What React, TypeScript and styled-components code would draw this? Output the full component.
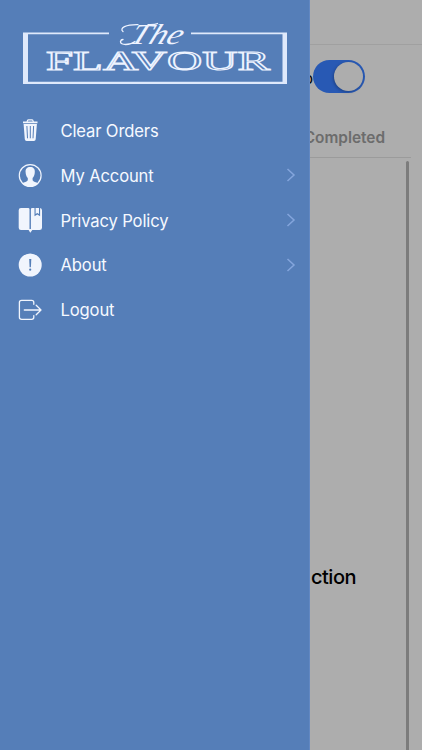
import React from 'react';
import styled, { createGlobalStyle } from 'styled-components';

const GlobalStyle = createGlobalStyle`
  * { box-sizing: border-box; }
  body { margin: 0; background: #adadad; font-family: Inter, sans-serif; }
`;

const Screen = styled.div`
  position: relative;
  width: 422px;
  height: 750px;
  overflow: hidden;
  background: #adadad;
`;

const Page = styled.main`
  height: 100%;
  display: flex;
  flex-direction: column;
`;

const Header = styled.header`
  height: 45px;
  flex: none;
  border-bottom: 1px solid #a0a0a0;
`;

const StatusRow = styled.div`
  height: 63px;
  flex: none;
  display: flex;
  align-items: center;
  justify-content: flex-end;
  padding-right: 57px;
  font-size: 15px;
  color: #000;
`;

const StatusLabel = styled.span`
  padding-top: 4px;
`;

const Toggle = styled.span`
  width: 52px;
  height: 33px;
  border-radius: 17px;
  background: #2859b4;
  display: flex;
  align-items: center;
  justify-content: flex-end;
  padding-right: 2px;
`;

const Knob = styled.span`
  width: 29px;
  height: 29px;
  border-radius: 50%;
  background: #adadad;
  box-shadow: -1px 1px 3px rgba(0, 0, 0, 0.25);
`;

const Tabs = styled.div`
  height: 50px;
  flex: none;
  display: flex;
  justify-content: flex-end;
  margin-right: 11px;
  padding: 20px 26px 0 0;
  border-bottom: 1px solid #9b9b9b;
  font-size: 15.4px;
  line-height: 20px;
  font-weight: 600;
  color: #6c6c6c;
`;

const List = styled.section`
  flex: 1;
  display: flex;
  justify-content: flex-end;
  padding: 3px 13px 0 0;
`;

const Empty = styled.p`
  margin: 404px 50px 0 0;
  font-size: 20px;
  line-height: 24px;
  font-weight: 500;
  letter-spacing: -0.5px;
  white-space: nowrap;
  color: #000;
`;

const ScrollBar = styled.span`
  width: 3px;
  border-radius: 2px 2px 0 0;
  background: #7c7c7c;
`;

const Drawer = styled.aside`
  position: absolute;
  inset: 0 auto 0 0;
  width: 310px;
  background: #557eb8;
  border-right: 1px solid #6288c2;
`;

const Logo = styled.svg`
  display: block;
  width: 309px;
  height: 108px;
`;

const Menu = styled.nav`
  display: flex;
  flex-direction: column;
`;

const Item = styled.a`
  height: 44.8px;
  display: flex;
  align-items: center;
  padding: 0 13px 0 18px;
  color: #f6f9ff;
`;

const Label = styled.span`
  flex: 1;
  margin-left: 18px;
  padding-top: 1.4px;
  font-size: 16.6px;
  line-height: 22px;
  letter-spacing: -0.14px;
`;

const Icon = styled.svg`
  width: 24.5px;
  height: 26px;
  flex: none;
  overflow: visible;
`;

const Arrow = styled.svg`
  width: 10px;
  height: 14px;
  margin-top: 0.5px;
`;

const ink = '#f1f5fd';

const Trash = () => (
  <Icon viewBox="0 0 24.5 26" fill={ink}>
    <path d="M5 4.5h3.5Q9 2.3 10.3 2.3h3.8q1.3 0 1.8 2.2h3.6v1.7H5zM9.7 4.5h5q-.2-1-1-1h-3q-.8 0-1 1z" fillRule="evenodd" />
    <path d="M5.6 6.900h13.300l-1.200 15.400q-.1 1.700-1.800 1.700H8.600q-1.700 0-1.800-1.700z" />
    <path d="M8.9 9l.6 12.3M12.3 9v12.3M15.6 9L15 21.3" stroke="#557eb8" strokeWidth="1" fill="none" />
  </Icon>
);

const Person = () => (
  <Icon viewBox="0 0 24.5 26" fill={ink}>
    <circle cx="12.2" cy="13.5" r="10.9" fill="none" stroke={ink} strokeWidth="1.2" />
    <path d="M12.2 4.9c-3.2 0-4.900 2-4.600 5 .1 2.800.9 4.700 2.200 6v2.400c-.8 1.600-3.600 1.700-5.700 3.200 4.300 4.200 11.900 4.200 16.200 0-2.100-1.500-5-1.600-5.700-3.200v-2.400c1.300-1.300 2.100-3.200 2.200-6 .3-3-1.400-5-4.600-5z" />
  </Icon>
);

const Book = () => (
  <Icon viewBox="0 0 24.5 26" fill={ink}>
    <path d="M3 1h7.200q1.300 0 1.300 1.300V23H3Q.7 23 .7 20.800V3.200Q.7 1 3 1zM12.900 2.300q0-1.300 1.300-1.300h2.300v8.300l2.800-1.700 2.800 1.700V1.100q1.900.4 1.900 2.100v17.600q0 2.200-2.500 2.200h-7.200l-2 2.700-1.700-2.700V22h2.300z" />
    <path d="M17.600 1h3.400v6.100l-1.700-1.100-1.700 1.100z" />
  </Icon>
);

const Alert = () => (
  <Icon viewBox="0 0 24.5 26" fill={ink}>
    <circle cx="12.2" cy="13" r="11.5" />
    <path d="M11.200 7h2.100l-.4 8.300h-1.300z" fill="#557eb8" />
    <circle cx="12.2" cy="17.7" r="1.1" fill="#557eb8" />
  </Icon>
);

const Exit = () => (
  <Icon viewBox="0 0 24.5 26" fill="none" stroke={ink} strokeWidth="1.3" strokeLinecap="round" strokeLinejoin="round">
    <path d="M15.800 7.300V5.500q0-2.100-2.100-2.100H3.600q-2.200 0-2.200 2.100v14.800q0 2.100 2.200 2.100h10.100q2.100 0 2.100-2.100v-1.700M6.300 13h16.500M18.200 8.200L23 13l-4.800 4.800" />
  </Icon>
);

const entries = [
  { label: 'Clear Orders', icon: Trash, more: false },
  { label: 'My Account', icon: Person, more: true },
  { label: 'Privacy Policy', icon: Book, more: true },
  { label: 'About', icon: Alert, more: true },
  { label: 'Logout', icon: Exit, more: false },
];

export default function App() {
  return (
    <Screen>
      <GlobalStyle />
      <Page>
        <Header />
        <StatusRow>
          <StatusLabel>o</StatusLabel>
          <Toggle><Knob /></Toggle>
        </StatusRow>
        <Tabs>Completed</Tabs>
        <List>
          <Empty>ction</Empty>
          <ScrollBar />
        </List>
      </Page>
      <Drawer>
        <Logo viewBox="0 0 309 108">
          <path fill="#dfe9fb" fillRule="evenodd" d="M23 32.5H109V34.2H28V81.800H282.500V34.200H191V32.500H287V84H23z" />
          <text x="0" y="0" transform="translate(128 43.800) skewX(-22)" fontFamily="Liberation Serif, serif" fontStyle="italic" fontSize="29" fill="#eef3ff" textLength="52" lengthAdjust="spacingAndGlyphs">The</text>
          <g fill="none" stroke="#eef3ff" strokeWidth="1.3" strokeLinecap="round">
            <path d="M123 31.500C119 28 126 24.500 138 24.700" />
            <path d="M135 41.500C130 45.500 120 45.500 120.500 41.500Q121 39.500 123 39.500" />
            <path d="M148 24.700Q155 25 157.500 23.500" />
          </g>
          <text x="46" y="69.600" fontFamily="Liberation Serif, serif" fontSize="27.5" fill="#557eb8" stroke="#edf3ff" strokeWidth="1.15" textLength="224" lengthAdjust="spacingAndGlyphs">FLAVOUR</text>
        </Logo>
        <Menu>
          {entries.map(({ label, icon: Glyph, more }) => (
            <Item key={label}>
              <Glyph />
              <Label>{label}</Label>
              {more && (
                <Arrow viewBox="0 0 10 14" fill="none" stroke="#84a5dc" strokeWidth="1.5">
                  <path d="M1.5 1l6.5 6-6.5 6" />
                </Arrow>
              )}
            </Item>
          ))}
        </Menu>
      </Drawer>
    </Screen>
  );
}
